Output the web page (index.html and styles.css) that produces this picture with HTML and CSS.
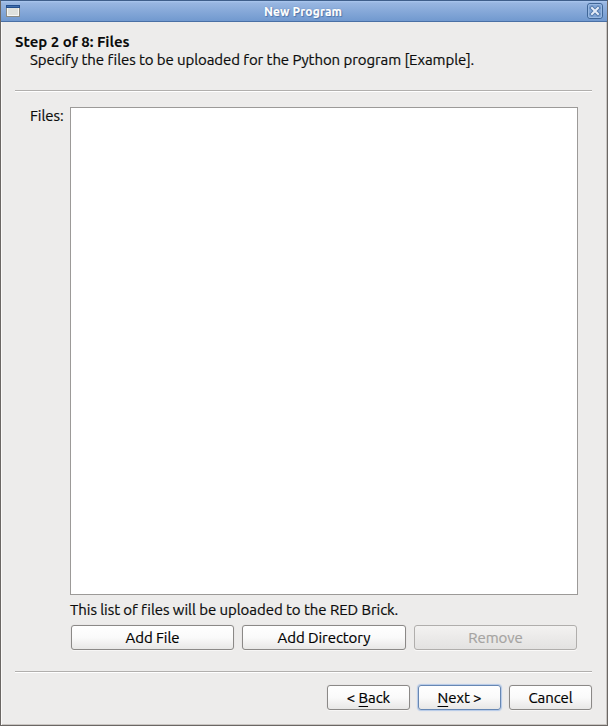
FILE: index.html
```html
<!DOCTYPE html>
<html lang="en">
<head>
<meta charset="utf-8">
<title>New Program</title>
<link rel="stylesheet" href="styles.css">
</head>
<body>
<div class="window">
  <header class="titlebar">
    <svg class="app-icon" width="14" height="12" viewBox="0 0 14 12">
      <rect x=".5" y=".5" width="13" height="11" fill="#dfe1dd" stroke="#8b8b85"/>
      <path d="M1.5 3v7.5h11V3" fill="none" stroke="#f7f7f5"/>
      <rect width="14" height="3" fill="#234f8e"/>
      <rect x="1" y="1" width="12" height="1" fill="#416fae"/>
    </svg>
    <span class="title">New Program</span>
    <svg class="close" width="16" height="16" viewBox="0 0 16 16">
      <rect x=".5" y=".5" width="15" height="15" rx="2.5" fill="#7fa4d5" stroke="#3f6697"/>
      <rect x="1.5" y="1.5" width="13" height="13" rx="1.5" fill="none" stroke="#98b8e1"/>
      <path d="M5 5l6 6M11 5l-6 6" stroke="#5379ab" stroke-width="4" stroke-linecap="square"/>
      <path d="M5 5l6 6M11 5l-6 6" stroke="#e4ecf7" stroke-width="2" stroke-linecap="square"/>
    </svg>
  </header>
  <main class="page">
    <h1>Step 2 of 8: Files</h1>
    <p class="subtitle">Specify the files to be uploaded for the Python program [Example].</p>
    <div class="rule"></div>
    <div class="form">
      <label class="label">Files:</label>
      <div class="field">
        <div class="list"></div>
        <p class="note">This list of files will be uploaded to the RED Brick.</p>
        <div class="actions">
          <button class="add-file">Add File</button>
          <button class="add-dir">Add Directory</button>
          <button class="remove" disabled>Remove</button>
        </div>
      </div>
    </div>
    <div class="rule"></div>
    <footer class="nav">
      <button class="back">&lt; <u>B</u>ack</button>
      <button class="default"><u>N</u>ext &gt;</button>
      <button class="cancel">Cancel</button>
    </footer>
  </main>
</div>
</body>
</html>
```
FILE: styles.css
```css
* { box-sizing: border-box; }
body {
  margin: 0;
  font: 15px/18px Ubuntu, "Noto Sans", sans-serif;
  letter-spacing: -0.07px;
  -webkit-text-stroke: 0.2px;
  color: #0c0c0c;
}
h1, p { margin: 0; white-space: nowrap; }
.window {
  width: 608px;
  height: 726px;
  background: #edeceb;
  border: 1px solid #6b6764;
  border-top-color: #3f5f8b;
  box-shadow: inset 1px 0 #faf9f8, inset -1px -1px #c9c5c2;
}
.titlebar {
  height: 21px;
  display: flex;
  align-items: center;
  justify-content: space-between;
  padding: 0 4px 0 5px;
  background: linear-gradient(#abc7ef, #98b6e1 2px, #7199cf);
  border-bottom: 1px solid #4a70a5;
}
.title {
  padding-top: 1px;
  margin-left: -1px;
  font-size: 12px;
  letter-spacing: 0.15px;
  font-weight: 700;
  color: #fff;
  text-shadow: 0 0 1px #3e659a, 1px 1px 1px #4c74ab;
}
.page { padding: 11px 15px 0 14px; }
h1 { font-size: 15px; line-height: 18px; font-weight: 700; letter-spacing: -0.04px; -webkit-text-stroke: 0; }
.subtitle { padding-left: 15px; height: 39px; letter-spacing: -0.083px; }
.rule {
  height: 2px;
  background: #b1afad;
  border-bottom: 1px solid #fff;
}
.form {
  display: flex;
  padding: 15px 14px 0 15px;
  height: 579px;
}
.label { width: 40px; flex: none; }
.field { flex: 1; }
.list {
  height: 488px;
  background: #fff;
  border: 1px solid #9c9a98;
}
.note { height: 30px; padding-top: 6px; letter-spacing: -0.055px; }
.actions {
  display: grid;
  grid-template-columns: 163px 164px 163px;
  gap: 8px;
  padding-left: 1px;
}
button {
  height: 25px;
  padding: 0;
  font: inherit;
  letter-spacing: inherit;
  line-height: 23px;
  color: #000;
  background: linear-gradient(#fff, #fafafa 50%, #e8e7e6);
  border: 1px solid #8b8987;
  border-radius: 3px;
  box-shadow: 0 1px #f7f6f5, 0 0 1px #c5c3c1;
}
button:disabled {
  color: #a5a3a1;
  background: linear-gradient(#f3f2f1, #e3e2e1);
  border-color: #b0aeac;
  box-shadow: 0 1px #faf9f8;
}
button.default {
  border-color: #6787b3;
  box-shadow: 0 0 1px 1px #b3c9e8;
}
u { text-decoration-thickness: 1px; text-underline-offset: 3px; }
.nav {
  display: flex;
  justify-content: flex-end;
  gap: 8px;
  padding-top: 12px;
}
.nav button { width: 83px; }
```
